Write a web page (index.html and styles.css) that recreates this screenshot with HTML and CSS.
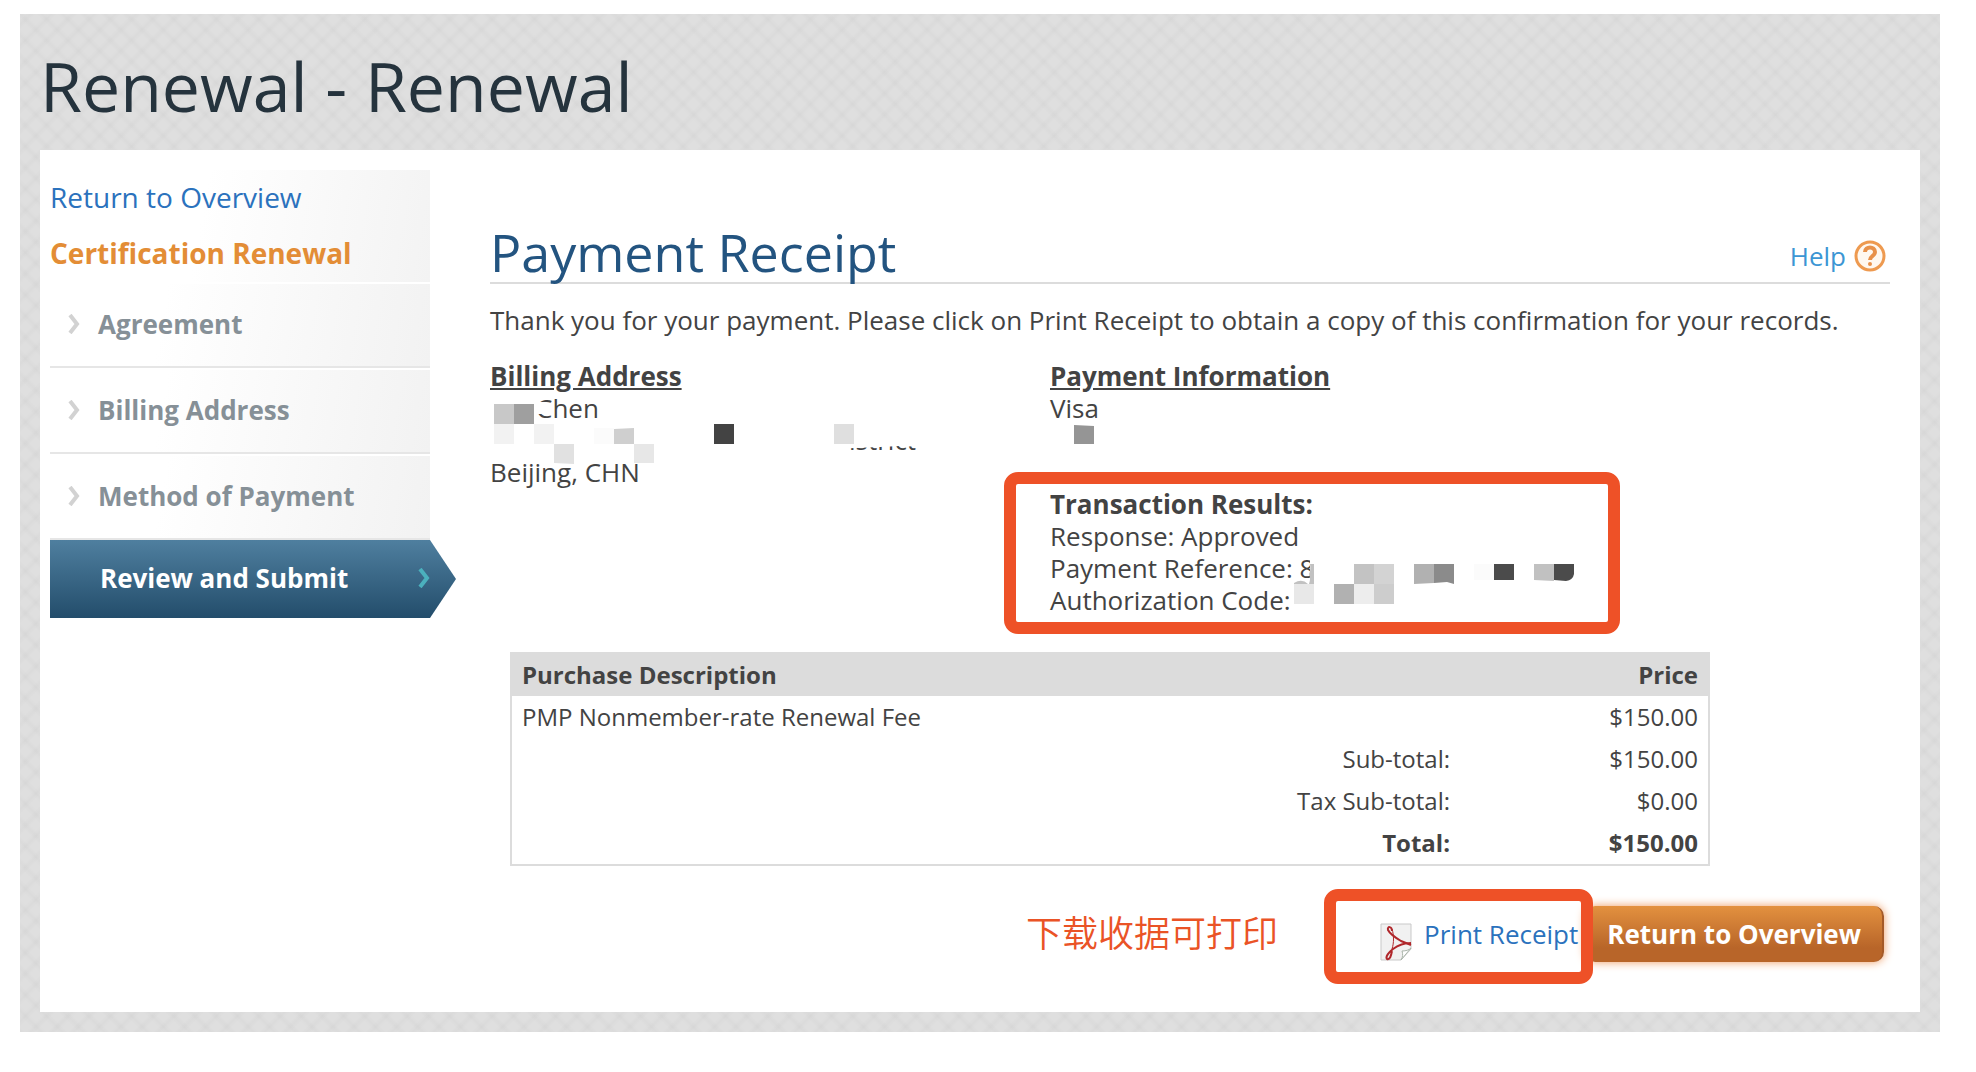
FILE: index.html
```html
<!DOCTYPE html>
<html lang="en">
<head>
    <meta charset="UTF-8">
    <meta name="viewport" content="width=device-width, initial-scale=1.0">
    <title>Renewal - Payment Receipt</title>
    <link rel="stylesheet" href="styles.css">
</head>
<body>

    <div class="page">
        <h1>Renewal - Renewal</h1>

        <div class="panel">
            <nav class="sidebar">
                <div class="nav-top">
                    <a class="overview-link" href="#">Return to Overview</a>
                    <strong class="nav-title">Certification Renewal</strong>
                </div>
                <ul class="steps">
                    <li class="step">
                        <svg class="chevron" width="12" height="20" viewBox="0 0 12 20"><path d="M2 1l7 9-7 9"/></svg>
                        <a href="#">Agreement</a>
                    </li>
                    <li class="step">
                        <svg class="chevron" width="12" height="20" viewBox="0 0 12 20"><path d="M2 1l7 9-7 9"/></svg>
                        <a href="#">Billing Address</a>
                    </li>
                    <li class="step">
                        <svg class="chevron" width="12" height="20" viewBox="0 0 12 20"><path d="M2 1l7 9-7 9"/></svg>
                        <a href="#">Method of Payment</a>
                    </li>
                    <li class="step current">
                        <a href="#" aria-current="step">Review and Submit</a>
                        <svg class="chevron" width="12" height="20" viewBox="0 0 12 20"><path d="M2 1l7 9-7 9"/></svg>
                    </li>
                </ul>
            </nav>

            <main class="content">
                <div class="title-row">
                    <h2>Payment Receipt</h2>
                    <a class="help" href="#">Help
                        <svg width="32" height="32" viewBox="0 0 32 32">
                            <circle cx="16" cy="16" r="14" fill="#fff8f0" stroke="#ee9a50" stroke-width="3"/>
                            <path d="M11 12c0-6 10-6 10 0 0 4-5 4-5 8" fill="none" stroke="#e8914a" stroke-width="4"/>
                            <circle cx="16" cy="24" r="2" fill="#e8914a"/>
                        </svg>
                    </a>
                </div>

                <p class="thanks">Thank you for your payment. Please click on Print Receipt to obtain a copy of this confirmation for your records.</p>

                <div class="details">
                    <section class="billing">
                        <h3>Billing Address</h3>
                        <p class="line name">Chen</p>
                        <p class="line district">istrict</p>
                        <p class="line">Beijing, CHN</p>
                        <!-- redacted name and street -->
                        <svg class="redact" width="450" height="128" viewBox="0 0 450 128">
                            <path fill="#fff" d="M44 42h12q3 2 3 6v6H44zM340 60h95v27l-25-1-20 1-50 2zM90 94h75v10H90z"/>
                            <path fill="#c8c8c8" d="M4 44h20v20H4z"/>
                            <path fill="#9f9f9f" d="M24 44h20v20H24z"/>
                            <path fill="#f2f2f2" d="M4 64h20v20H4zM44 64h20v20H44z"/>
                            <path fill="#fbfbfb" d="M104 68h20v16h-20z"/>
                            <path fill="#cfcfcf" d="M124 69l20-1v16h-20z"/>
                            <path fill="#e1e1e1" d="M64 84h20v20l-20-1z"/>
                            <path fill="#e7e7e7" d="M144 84h20v19h-20z"/>
                            <path fill="#434343" d="M224 64h20v20h-20z"/>
                            <path fill="#dfdfdf" d="M344 64h20v20h-20z"/>
                        </svg>
                    </section>

                    <section class="payment">
                        <h3>Payment Information</h3>
                        <p class="line">Visa</p>
                        <div class="results">
                            <p class="line"><strong>Transaction Results:</strong></p>
                            <p class="line">Response: Approved</p>
                            <p class="line">Payment Reference: 8</p>
                            <p class="line">Authorization Code:</p>
                        </div>
                        <!-- redacted card number and reference codes -->
                        <svg class="redact" width="540" height="256" viewBox="0 0 540 256">
                            <path fill="#959595" d="M24 65l20 1v18H24z"/>
                            <path fill="#fff" d="M260 200h8v26h-8z"/>
                            <path fill="#c1c1c1" d="M260 204h4v20h-5q2-6 0-10 2-4 1-10zM244 223q8-5 14 1h-14z"/>
                            <path fill="#e8e8e8" d="M244 224h20v20h-20z"/>
                            <path fill="#b1b1b1" d="M284 224h20v20h-20zM364 204h20v19l-20 1z"/>
                            <path fill="#ededed" d="M304 224h20v20h-20z"/>
                            <path fill="#c3c3c3" d="M304 204h20v20h-20z"/>
                            <path fill="#d3d3d3" d="M324 204h20v20h-20z"/>
                            <path fill="#cdcdcd" d="M324 224h20v20h-20z"/>
                            <path fill="#8b8b8b" d="M384 204h20v20l-7-2-13 1z"/>
                            <path fill="#fbfbfb" d="M424 204h20v16h-20z"/>
                            <path fill="#4b4b4b" d="M444 204h20v16h-20zM504 204h20v10q-1 6-8 7l-12-1z"/>
                            <path fill="#c1c1c1" d="M484 204h20v17l-20-1z"/>
                        </svg>
                    </section>
                </div>

                <table class="purchase">
                    <thead>
                        <tr>
                            <th>Purchase Description</th>
                            <th></th>
                            <th class="num">Price</th>
                        </tr>
                    </thead>
                    <tbody>
                        <tr>
                            <td>PMP Nonmember-rate Renewal Fee</td>
                            <td></td>
                            <td class="num">$150.00</td>
                        </tr>
                        <tr>
                            <td></td>
                            <td class="num">Sub-total:</td>
                            <td class="num">$150.00</td>
                        </tr>
                        <tr>
                            <td></td>
                            <td class="num">Tax Sub-total:</td>
                            <td class="num">$0.00</td>
                        </tr>
                        <tr class="total">
                            <td></td>
                            <td class="num">Total:</td>
                            <td class="num">$150.00</td>
                        </tr>
                    </tbody>
                </table>

                <div class="actions">
                    <span class="note" lang="zh-CN">下载收据可打印</span>
                    <div class="print-box">
                        <a class="print" href="#">
                            <svg width="32" height="38" viewBox="0 0 32 38">
                                <path d="M1 1h30v25L21 37H1z" fill="#f1f1f1" stroke="#c9c9c9"/>
                                <path d="M21 37c2-3 2-6 1-9 4 0 7-1 9-3z" fill="#fff" stroke="#aab5aa"/>
                                <g fill="none" stroke="#b0272b">
                                    <path d="M12 8c0-5-5-5-4-1 2 4 8 8 13 11l10 4" stroke-width="2"/>
                                    <path d="M12 6c2 6 2 14 0 20" stroke-width="1"/>
                                    <path d="M31 20c-8 0-14 3-18 6-4 3-8 8-6 10 3 1 4-3 5-8" stroke-width="2"/>
                                </g>
                            </svg>
                            <span>Print Receipt</span>
                        </a>
                    </div>
                    <button class="return" type="button">Return to Overview</button>
                </div>
            </main>
        </div>
    </div>

</body>
</html>
```
FILE: styles.css
```css
* { box-sizing: border-box; }
body { margin: 0; padding: 14px 36px 40px 20px; background: #fff; color: #434343; font-family: "Open Sans", "Noto Sans", sans-serif; font-size: 26px; line-height: 32px; }
h1, h2, h3, p, ul { margin: 0; padding: 0; }
a { color: #2b72bd; text-decoration: none; }
svg { display: block; flex: none; }

/* grey crosshatch frame */
.page {
    padding: 26px 20px 20px;
    background-color: #dfdfdf;
    background-image:
        repeating-linear-gradient(45deg, rgba(0, 0, 0, 0.02), transparent 4px 11px, rgba(0, 0, 0, 0.02) 15px),
        repeating-linear-gradient(-45deg, rgba(0, 0, 0, 0.02), transparent 4px 11px, rgba(0, 0, 0, 0.02) 15px);
}
h1 { margin-bottom: 18px; color: #25333d; font-size: 68px; line-height: 92px; font-weight: 400; }
.panel { display: flex; align-items: flex-start; gap: 60px; padding: 20px 30px 28px 10px; background: #fff; }

/* left menu */
.sidebar { flex: none; width: 380px; }
.nav-top { display: flex; flex-direction: column; gap: 24px; height: 112px; padding-top: 11px; background: linear-gradient(100deg, #fff 40%, #f3f3f3); }
.overview-link { font-size: 28px; }
.nav-title { color: #e38d36; font-size: 28px; }
.steps { list-style: none; }
.step { display: flex; align-items: center; gap: 18px; height: 86px; padding: 0 0 2px 18px; border-top: 2px solid #fff; border-bottom: 2px solid #e6e6e6; background: linear-gradient(100deg, #fff 30%, #f2f2f2); font-weight: 700; }
.step a { color: #869097; }
.chevron { fill: none; stroke: #d2d2d2; stroke-width: 4; }
.step.current { justify-content: space-between; width: 406px; height: 78px; padding: 0 26px 2px 50px; border: 0; background: linear-gradient(#4f7f9f, #234d6b); clip-path: polygon(0 0, 380px 0, 100% 50%, 380px 100%, 0 100%); }
.step.current a { color: #fff; }
.step.current .chevron { stroke: #4bb0bd; }

/* receipt */
.content { flex: 1; min-width: 0; padding-top: 52px; }
.title-row { display: flex; justify-content: space-between; align-items: center; border-bottom: 2px solid #dcdcdc; }
h2 { color: #235480; font-size: 52px; line-height: 60px; font-weight: 400; }
.help { display: flex; align-items: center; gap: 8px; padding: 8px 4px 0 0; color: #3c96d4; }
.thanks { margin: 20px 0 24px; }
.details { display: grid; grid-template-columns: 2fr 3fr; }
.billing, .payment { position: relative; }
h3 { font-size: 26px; line-height: 32px; text-decoration: underline; }
.line { min-height: 32px; white-space: nowrap; }
.name { padding-left: 46px; }
.district { padding-left: 359px; }
.redact { position: absolute; top: 0; left: 0; }
.results { width: 616px; margin: 48px 0 18px -46px; padding: 4px 34px 6px; border: 12px solid #ee5127; border-radius: 14px; }

.purchase { width: calc(100% - 200px); margin-left: 20px; border: 2px solid #dcdcdc; border-collapse: collapse; font-size: 24px; }
.purchase th { background: #dcdcdc; }
.purchase th, .purchase td { padding: 5px 10px; text-align: left; }
.purchase .num { text-align: right; }
.purchase th:last-child { width: 249px; }
.total { font-weight: 700; }

.actions { display: flex; justify-content: flex-end; align-items: flex-start; margin-top: 23px; padding-right: 6px; }
.note { margin: 16px 46px 0 0; color: #ea5326; font-family: "Noto Sans CJK SC", sans-serif; font-size: 36px; line-height: 52px; font-weight: 350; }
.print-box { position: relative; z-index: 1; padding: 14px 3px 14px 44px; border: 12px solid #ee5127; border-radius: 14px; }
.print { display: flex; align-items: flex-start; gap: 12px; height: 43px; }
.print svg { margin-top: 8px; }
.print span { padding-top: 3px; }
.return { height: 56px; margin: 17px 0 0 -8px; padding: 0 21px 0 22px; border: 0; border-right: 2px solid #a55a28; border-radius: 10px; background: linear-gradient(#e3913f, #b86529 75%); box-shadow: 0 0 10px #ee9a60; color: #fff; font: inherit; font-weight: 700; cursor: pointer; }
```
